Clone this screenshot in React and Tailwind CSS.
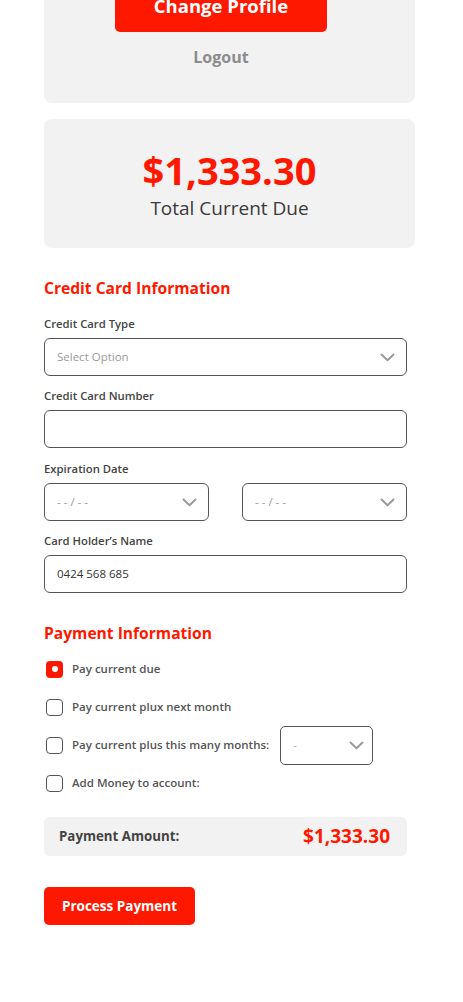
import React from "react";

const Chevron = () => (
  <svg width="15" height="9" viewBox="0 0 15 9" fill="none" className="shrink-0">
    <path d="M1.5 1.5 L7.5 7.2 L13.5 1.5" stroke="#9a9a9a" strokeWidth="2" strokeLinecap="round" strokeLinejoin="round" />
  </svg>
);

const SelectBox = ({ text, className = "" }) => (
  <div className={`flex h-[38px] items-center justify-between rounded-[6px] border-[1.5px] border-[#555] bg-white pl-[12px] pr-[11px] ${className}`}>
    <span className="text-[11.5px] text-[#9a9a9a]">{text}</span>
    <Chevron />
  </div>
);

const Label = ({ children }) => (
  <div className="h-[16px] text-[11.3px] font-semibold leading-[16px] text-[#444]">{children}</div>
);

const Check = ({ checked }) =>
  checked ? (
    <div className="flex h-[17px] w-[17px] shrink-0 items-center justify-center rounded-[4px] bg-[#ff1800]">
      <div className="h-[6px] w-[6px] rounded-full bg-white" />
    </div>
  ) : (
    <div className="h-[17px] w-[17px] shrink-0 rounded-[4px] border-[1.5px] border-[#555] bg-white" />
  );

export default function App() {
  return (
    <div className="min-h-[1002px] w-[463px] overflow-hidden bg-white" style={{ fontFamily: "'Open Sans', 'Liberation Sans', sans-serif" }}>
      <div className="ml-[44px] w-[371px]">
        {/* Profile card */}
        <div className="-mt-[30px] flex flex-col items-center rounded-[8px] bg-[#f2f2f2] pt-[8px] pr-[17px] pb-[35px]">
          <div className="flex h-[54px] w-[212px] items-center justify-center rounded-[5px] bg-[#ff1800] pt-[2px] text-[18.5px] font-bold text-white">
            Change Profile
          </div>
          <div className="mt-[14px] h-[22px] text-[16px] font-bold leading-[22px] text-[#8c8c8c]">Logout</div>
        </div>

        {/* Total card */}
        <div className="mt-[16px] flex h-[129px] flex-col items-center rounded-[8px] bg-[#f2f2f2] pt-[28px]">
          <div className="h-[46px] text-[38px] font-bold leading-[46px] text-[#ff1800]">$1,333.30</div>
          <div className="mt-[2px] h-[26px] text-[19px] leading-[26px] text-[#3a3a3a]">Total Current Due</div>
        </div>

        {/* Credit card info */}
        <div className="w-[363px]">
          <div className="mt-[29px] h-[22px] text-[15.6px] font-bold leading-[22px] text-[#ff1800]">Credit Card Information</div>

          <div className="mt-[17px]"><Label>Credit Card Type</Label></div>
          <SelectBox text="Select Option" className="mt-[6px]" />

          <div className="mt-[12px]"><Label>Credit Card Number</Label></div>
          <div className="mt-[6px] h-[38px] rounded-[6px] border-[1.5px] border-[#555] bg-white" />

          <div className="mt-[13px]"><Label>Expiration Date</Label></div>
          <div className="mt-[6px] flex justify-between">
            <SelectBox text="- - / - -" className="w-[165px]" />
            <SelectBox text="- - / - -" className="w-[165px]" />
          </div>

          <div className="mt-[12px]"><Label>Card Holder’s Name</Label></div>
          <div className="mt-[6px] flex h-[38px] items-center rounded-[6px] border-[1.5px] border-[#555] bg-white pl-[12px] text-[11.5px] text-[#333]">
            0424 568 685
          </div>

          {/* Payment info */}
          <div className="mt-[29px] h-[22px] text-[15.6px] font-bold leading-[22px] text-[#ff1800]">Payment Information</div>

          <div className="mt-[6px] flex flex-col">
            <div className="flex h-[38px] items-center gap-[9px] pl-[2px]">
              <Check checked />
              <span className="text-[11.5px] font-semibold text-[#555]">Pay current due</span>
            </div>
            <div className="flex h-[38px] items-center gap-[9px] pl-[2px]">
              <Check />
              <span className="text-[11.5px] font-semibold text-[#555]">Pay current plux next month</span>
            </div>
            <div className="flex h-[38px] items-center gap-[9px] pl-[2px]">
              <Check />
              <span className="text-[11.5px] font-semibold text-[#555]">Pay current plus this many months:</span>
              <div className="ml-[2px] flex h-[39px] w-[93px] items-center justify-between rounded-[5px] border-[1.5px] border-[#555] bg-white pl-[12px] pr-[8px]">
                <span className="text-[11px] text-[#aaa]">-</span>
                <Chevron />
              </div>
            </div>
            <div className="flex h-[38px] items-center gap-[9px] pl-[2px]">
              <Check />
              <span className="text-[11.5px] font-semibold text-[#555]">Add Money to account:</span>
            </div>
          </div>

          <div className="mt-[15px] flex h-[39px] items-center justify-between rounded-[6px] bg-[#f2f2f2] pl-[15px] pr-[17px]">
            <span className="text-[13.3px] font-bold text-[#444]">Payment Amount:</span>
            <span className="text-[19px] font-bold text-[#ff1800]">$1,333.30</span>
          </div>

          <div className="mt-[31px] flex h-[38px] w-[151px] items-center justify-center rounded-[5px] bg-[#ff1800] text-[13.5px] font-bold text-white">
            Process Payment
          </div>
        </div>
      </div>
    </div>
  );
}
